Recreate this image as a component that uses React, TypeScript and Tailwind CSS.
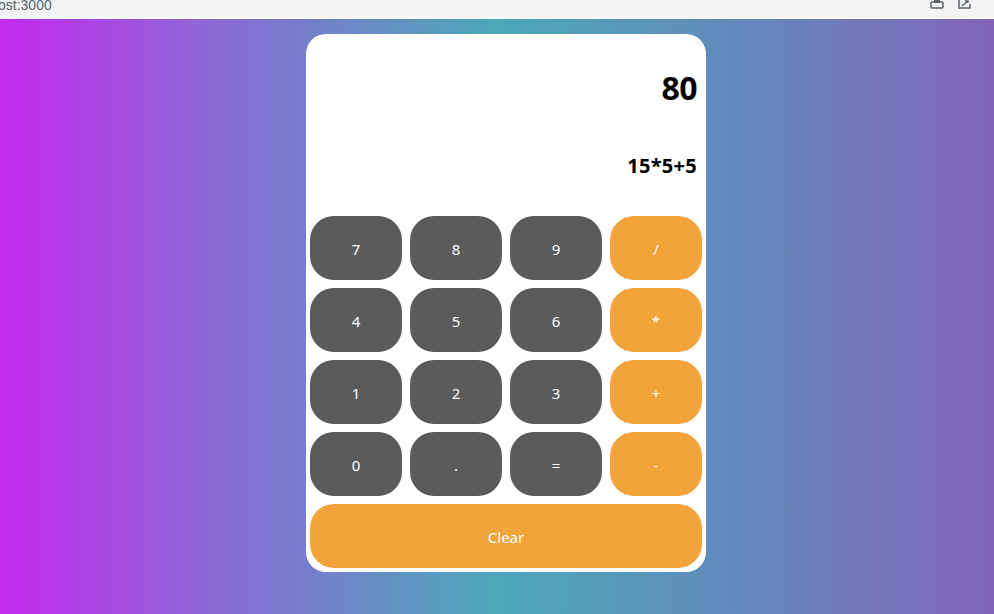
import React, { useState } from 'react';

const KEYS: { label: string; op?: boolean }[] = [
  { label: '7' }, { label: '8' }, { label: '9' }, { label: '/', op: true },
  { label: '4' }, { label: '5' }, { label: '6' }, { label: '*', op: true },
  { label: '1' }, { label: '2' }, { label: '3' }, { label: '+', op: true },
  { label: '0' }, { label: '.' }, { label: '=' }, { label: '-', op: true },
];

const App: React.FC = () => {
  const [expr] = useState('15*5+5');
  const [result] = useState('80');

  return (
    <div className="h-[614px] w-[994px] overflow-hidden flex flex-col font-['Noto_Sans','Open_Sans',sans-serif]">
      {/* Browser strip */}
      <div className="h-[19px] shrink-0 bg-[#f1f3f4] border-b-2 border-[#fbfbfb] flex items-start justify-between">
        <span className="text-[14px] leading-[10px] text-[#5f6368] -ml-[2px] font-['Liberation_Sans',sans-serif]">ost:3000</span>
        <div className="flex items-start gap-[14px] pr-[22px]">
          <svg width="14" height="9" viewBox="0 0 14 9" fill="none">
            <rect x="1" y="2" width="12" height="6" rx="1" stroke="#5f6368" strokeWidth="1.5" />
            <rect x="4" y="0" width="6" height="3" fill="#5f6368" />
          </svg>
          <svg width="14" height="9" viewBox="0 0 14 9" fill="none">
            <path d="M1 0 V8 H12 V4" stroke="#5f6368" strokeWidth="1.5" />
            <path d="M4 6 L10 1 M7 1 H10 V3" stroke="#5f6368" strokeWidth="1.5" />
          </svg>
        </div>
      </div>

      {/* Page */}
      <div className="flex-1 bg-[linear-gradient(to_right,#c52aef_0%,#8a6ad4_22%,#4ba8b9_50%,#6488bb_75%,#8264ba_100%)] flex justify-center pl-[18px] pt-[15px]">
        <div className="w-[400px] h-[538px] bg-white rounded-[20px] p-[4px] flex flex-col">
          {/* Display */}
          <div className="h-[178px] flex flex-col items-end pr-[5px] text-black font-bold">
            <div className="text-[32px] leading-none mt-[34px] tracking-[-0.5px]">{result}</div>
            <div className="text-[20px] leading-none mt-[52px] tracking-[0.3px]">{expr}</div>
          </div>

          {/* Keys */}
          <div className="grid grid-cols-4 gap-[8px]">
            {KEYS.map(k => (
              <button
                key={k.label}
                className={`h-[64px] rounded-[24px] text-white text-[15px] pt-[2px] ${k.op ? 'bg-[#f2a33a]' : 'bg-[#5b5b5b]'}`}
              >
                {k.label}
              </button>
            ))}
            <button className="col-span-4 h-[64px] rounded-[24px] bg-[#f2a33a] text-white text-[15px] pt-[2px]">
              Clear
            </button>
          </div>
        </div>
      </div>
    </div>
  );
};

export default App;
